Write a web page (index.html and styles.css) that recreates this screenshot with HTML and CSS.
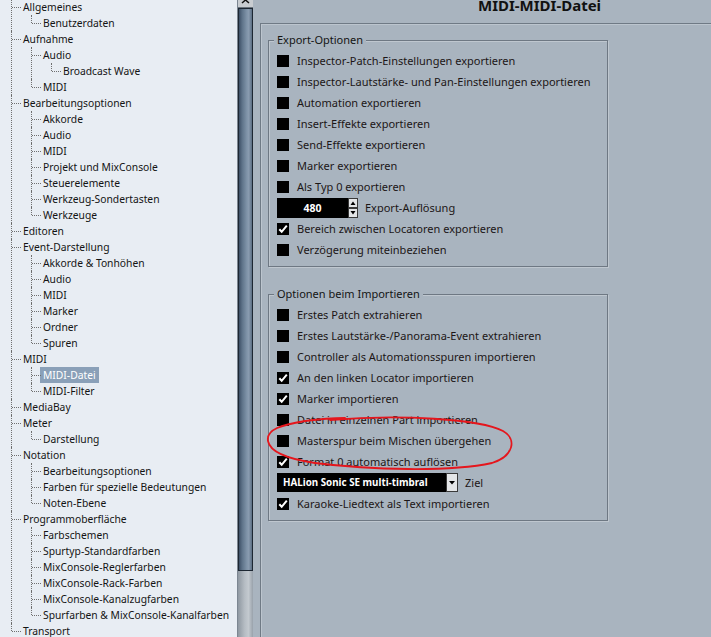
FILE: index.html
```html
<!DOCTYPE html>
<html lang="de">
<head>
<meta charset="utf-8">
<title>MIDI-MIDI-Datei</title>
<link rel="stylesheet" href="styles.css">
</head>
<body>
<div class="window">
  <nav class="tree-pane">
    <ul class="tree">
      <li><span class="label">Allgemeines</span>
        <ul><li><span class="label">Benutzerdaten</span></li></ul>
      </li>
      <li><span class="label">Aufnahme</span>
        <ul>
          <li><span class="label">Audio</span>
            <ul><li><span class="label">Broadcast Wave</span></li></ul>
          </li>
          <li><span class="label">MIDI</span></li>
        </ul>
      </li>
      <li><span class="label">Bearbeitungsoptionen</span>
        <ul>
          <li><span class="label">Akkorde</span></li>
          <li><span class="label">Audio</span></li>
          <li><span class="label">MIDI</span></li>
          <li><span class="label">Projekt und MixConsole</span></li>
          <li><span class="label">Steuerelemente</span></li>
          <li><span class="label">Werkzeug-Sondertasten</span></li>
          <li><span class="label">Werkzeuge</span></li>
        </ul>
      </li>
      <li><span class="label">Editoren</span></li>
      <li><span class="label">Event-Darstellung</span>
        <ul>
          <li><span class="label">Akkorde &amp; Tonhöhen</span></li>
          <li><span class="label">Audio</span></li>
          <li><span class="label">MIDI</span></li>
          <li><span class="label">Marker</span></li>
          <li><span class="label">Ordner</span></li>
          <li><span class="label">Spuren</span></li>
        </ul>
      </li>
      <li><span class="label">MIDI</span>
        <ul>
          <li><span class="label"><span class="sel">MIDI-Datei</span></span></li>
          <li><span class="label">MIDI-Filter</span></li>
        </ul>
      </li>
      <li><span class="label">MediaBay</span></li>
      <li><span class="label">Meter</span>
        <ul><li><span class="label">Darstellung</span></li></ul>
      </li>
      <li><span class="label">Notation</span>
        <ul>
          <li><span class="label">Bearbeitungsoptionen</span></li>
          <li><span class="label">Farben für spezielle Bedeutungen</span></li>
          <li><span class="label">Noten-Ebene</span></li>
        </ul>
      </li>
      <li><span class="label">Programmoberfläche</span>
        <ul>
          <li><span class="label">Farbschemen</span></li>
          <li><span class="label">Spurtyp-Standardfarben</span></li>
          <li><span class="label">MixConsole-Reglerfarben</span></li>
          <li><span class="label">MixConsole-Rack-Farben</span></li>
          <li><span class="label">MixConsole-Kanalzugfarben</span></li>
          <li><span class="label">Spurfarben &amp; MixConsole-Kanalfarben</span></li>
        </ul>
      </li>
      <li><span class="label">Transport</span></li>
    </ul>
  </nav>

  <div class="scrollbar">
    <div class="sb-btn">
      <svg width="15" height="8" viewBox="0 0 15 8"><polyline points="4,3 7.5,0 11,3" fill="none" stroke="#111" stroke-width="1.5"/></svg>
    </div>
    <div class="sb-thumb"></div>
    <div class="sb-track"></div>
  </div>

  <main class="main">
    <h1 class="title">MIDI-MIDI-Datei</h1>
    <div class="content">
      <section class="group">
        <div class="group-title">Export-Optionen</div>
        <div class="rows">
          <div class="row"><span class="cb"></span><span>Inspector-Patch-Einstellungen exportieren</span></div>
          <div class="row"><span class="cb"></span><span>Inspector-Lautstärke- und Pan-Einstellungen exportieren</span></div>
          <div class="row"><span class="cb"></span><span>Automation exportieren</span></div>
          <div class="row"><span class="cb"></span><span>Insert-Effekte exportieren</span></div>
          <div class="row"><span class="cb"></span><span>Send-Effekte exportieren</span></div>
          <div class="row"><span class="cb"></span><span>Marker exportieren</span></div>
          <div class="row"><span class="cb"></span><span>Als Typ 0 exportieren</span></div>
          <div class="row">
            <span class="spin">
              <span class="spin-field">480</span>
              <span class="spin-btns">
                <svg width="10" height="20" viewBox="0 0 10 20">
                  <rect x="0.5" y="0.5" width="9" height="9" fill="#e4e6e8" stroke="#3a3a3a"/>
                  <rect x="0.5" y="10.5" width="9" height="9" fill="#e4e6e8" stroke="#3a3a3a"/>
                  <polygon points="2.5,7 5,3.5 7.5,7" fill="#000"/>
                  <polygon points="2.5,13 5,16.5 7.5,13" fill="#000"/>
                </svg>
              </span>
            </span>
            <span class="spin-label">Export-Auflösung</span>
          </div>
          <div class="row"><span class="cb on"><svg width="12" height="12" viewBox="0 0 12 12"><polyline points="2.3,6.2 4.7,8.8 9.8,2.6" fill="none" stroke="#fff" stroke-width="2"/></svg></span><span>Bereich zwischen Locatoren exportieren</span></div>
          <div class="row"><span class="cb"></span><span>Verzögerung miteinbeziehen</span></div>
        </div>
      </section>

      <section class="group group-import">
        <div class="group-title">Optionen beim Importieren</div>
        <div class="rows">
          <div class="row"><span class="cb"></span><span>Erstes Patch extrahieren</span></div>
          <div class="row"><span class="cb"></span><span>Erstes Lautstärke-/Panorama-Event extrahieren</span></div>
          <div class="row"><span class="cb"></span><span>Controller als Automationsspuren importieren</span></div>
          <div class="row"><span class="cb on"><svg width="12" height="12" viewBox="0 0 12 12"><polyline points="2.3,6.2 4.7,8.8 9.8,2.6" fill="none" stroke="#fff" stroke-width="2"/></svg></span><span>An den linken Locator importieren</span></div>
          <div class="row"><span class="cb on"><svg width="12" height="12" viewBox="0 0 12 12"><polyline points="2.3,6.2 4.7,8.8 9.8,2.6" fill="none" stroke="#fff" stroke-width="2"/></svg></span><span>Marker importieren</span></div>
          <div class="row"><span class="cb"></span><span>Datei in einzelnen Part importieren</span></div>
          <div class="row"><span class="cb"></span><span>Masterspur beim Mischen übergehen</span></div>
          <div class="row"><span class="cb on"><svg width="12" height="12" viewBox="0 0 12 12"><polyline points="2.3,6.2 4.7,8.8 9.8,2.6" fill="none" stroke="#fff" stroke-width="2"/></svg></span><span>Format 0 automatisch auflösen</span></div>
          <div class="row">
            <span class="select">
              <span class="select-field">HALion Sonic SE multi-timbral</span>
              <span class="select-btn">
                <svg width="12" height="19" viewBox="0 0 12 19">
                  <rect x="0.5" y="0.5" width="11" height="18" fill="#e4e6e8" stroke="#3a3a3a"/>
                  <polygon points="3,8 6,11.5 9,8" fill="#000"/>
                </svg>
              </span>
            </span>
            <span class="select-label">Ziel</span>
          </div>
          <div class="row"><span class="cb on"><svg width="12" height="12" viewBox="0 0 12 12"><polyline points="2.3,6.2 4.7,8.8 9.8,2.6" fill="none" stroke="#fff" stroke-width="2"/></svg></span><span>Karaoke-Liedtext als Text importieren</span></div>
        </div>
      </section>
    </div>
  </main>
</div>

<svg class="annotation" width="711" height="637" viewBox="0 0 711 637">
  <path d="M 330,420 C 400,414 480,419 503,431 C 517,439 514,456 492,463 C 450,472 370,470 315,463 C 288,459 270,452 268,441 C 266,429 282,425 305,421 C 320,419 335,418 345,418" fill="none" stroke="#e5161d" stroke-width="1.8" stroke-linecap="round"/>
</svg>
</body>
</html>
```

FILE: styles.css
```css
* { box-sizing: border-box; }

html, body {
  margin: 0;
  padding: 0;
  width: 711px;
  height: 637px;
  overflow: hidden;
}

body {
  font-family: "Noto Sans", "Open Sans", sans-serif;
  font-size: 11px;
  color: #1a1a1a;
  position: relative;
}

.window {
  display: flex;
  width: 711px;
  height: 637px;
}

/* ---------- tree ---------- */
.tree-pane {
  width: 237px;
  flex: none;
  background: #e8edf3;
  overflow: hidden;
  font-size: 10.3px;
}

.tree, .tree ul {
  list-style: none;
  margin: 0;
  padding: 0;
}

.tree { margin-top: -1px; }

.tree ul { margin-left: 20px; }

.tree li {
  position: relative;
}

.tree li::before {
  content: "";
  position: absolute;
  left: 11px;
  top: 0;
  bottom: 0;
  border-left: 1px dotted #707070;
}

.tree li:last-child::before {
  bottom: auto;
  height: 8px;
}

.tree li::after {
  content: "";
  position: absolute;
  left: 12px;
  top: 8px;
  width: 9px;
  border-top: 1px dotted #707070;
}

.label {
  display: block;
  height: 16px;
  line-height: 16px;
  padding-left: 23px;
  white-space: nowrap;
  color: #141414;
}

.sel {
  display: inline-block;
  background: #8aa0b8;
  color: #fff;
  padding: 0 3px;
  margin-left: -3px;
  line-height: 16px;
}

/* ---------- scrollbar ---------- */
.scrollbar {
  width: 16px;
  flex: none;
  display: flex;
  flex-direction: column;
  border-left: 1px solid #7c8691;
  background: #a9b1b9;
}

.sb-btn {
  height: 8px;
  background: #c9cdd1;
  border-bottom: 1px solid #6a737c;
  display: flex;
  justify-content: center;
}

.sb-btn svg { display: block; }

.sb-thumb {
  height: 563px;
  border: 1px solid #1d2732;
  background: linear-gradient(to right, #3e5066 0%, #5e7389 25%, #7f93a8 60%, #8a9cb0 75%, #5a6d82 100%);
}

.sb-track {
  flex: 1;
  background: linear-gradient(to right, #8f98a1 0%, #b6bdc4 45%, #c3c9cf 70%, #99a2ab 100%);
}

/* ---------- main ---------- */
.main {
  flex: 1;
  background: #a9b4bf;
  display: flex;
  flex-direction: column;
  padding-left: 7px;
}

.title {
  margin: -2px 0 0 0;
  height: 25px;
  padding-left: 218px;
  font-size: 15px;
  font-weight: bold;
  line-height: 15px;
  color: #111;
  white-space: nowrap;
}

.content {
  flex: 1;
  border-top: 1px solid #6f7a85;
  border-left: 1px solid #6f7a85;
  box-shadow: inset 1px 1px 0 #bcc5ce;
  padding: 16px 0 0 7px;
}

.group {
  width: 340px;
  border: 1px solid #6e7883;
  box-shadow: 1px 1px 0 #bfc7cf, inset 1px 1px 0 #bfc7cf;
  padding: 0 8px 6px 8px;
  display: flex;
  flex-direction: column;
}

.group-import { margin-top: 27px; }

.group-title {
  align-self: flex-start;
  margin: -9px 0 0 -3px;
  padding: 0 3px;
  height: 16px;
  line-height: 16px;
  background: #a9b4bf;
  color: #141414;
}

.rows {
  margin-top: 2px;
  display: flex;
  flex-direction: column;
}

.row {
  height: 21px;
  display: flex;
  align-items: center;
  gap: 8px;
  white-space: nowrap;
  color: #1c1616;
}

.cb {
  width: 12px;
  height: 12px;
  flex: none;
  background: #000;
  display: block;
}

.cb svg { display: block; }

.spin {
  display: flex;
  height: 20px;
  flex: none;
}

.spin-field {
  width: 71px;
  height: 20px;
  background: #000;
  color: #fff;
  font-weight: bold;
  text-align: center;
  line-height: 20px;
  font-size: 10.5px;
}

.spin-btns svg, .select-btn svg { display: block; }

.spin-label { margin-left: -1px; }

.select {
  display: flex;
  height: 19px;
  flex: none;
}

.select-field {
  width: 169px;
  height: 19px;
  background: #000;
  color: #fff;
  font-weight: bold;
  line-height: 19px;
  padding-left: 6px;
  font-size: 9.8px;
}

.select-label { margin-left: -1px; }

/* ---------- annotation ---------- */
.annotation {
  position: absolute;
  left: 0;
  top: 0;
  pointer-events: none;
}
```
